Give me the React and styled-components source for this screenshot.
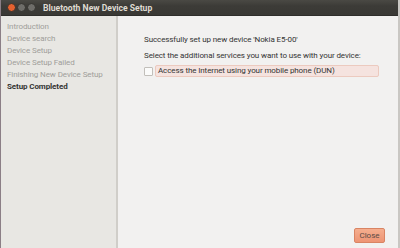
import styled, { createGlobalStyle } from "styled-components";

const GlobalStyle = createGlobalStyle`
  html, body {
    margin: 0;
    padding: 0;
    background: #f2f1f0;
  }
  body {
    font-family: Roboto, "Liberation Sans", sans-serif;
  }
`;

const steps = [
  "Introduction",
  "Device search",
  "Device Setup",
  "Device Setup Failed",
  "Finishing New Device Setup",
  "Setup Completed",
];

const App = () => {
  return (
    <>
      <GlobalStyle />
      <Window>
        <TitleBar>
          <WindowButtons>
            <WinButton color="#e5612f" />
            <WinButton color="#6e6d69" />
            <WinButton color="#6e6d69" />
          </WindowButtons>
          <Title>Bluetooth New Device Setup</Title>
        </TitleBar>
        <Body>
          <Sidebar>
            {steps.map((step, i) => (
              <Step key={step} current={i === steps.length - 1}>
                {step}
              </Step>
            ))}
          </Sidebar>
          <Content>
            <Message>Successfully set up new device 'Nokia E5-00'</Message>
            <Message>Select the additional services you want to use with your device:</Message>
            <ServiceRow>
              <CheckBox />
              <ServiceLabel>Access the Internet using your mobile phone (DUN)</ServiceLabel>
            </ServiceRow>
            <Footer>
              <CloseButton>Close</CloseButton>
            </Footer>
          </Content>
        </Body>
      </Window>
    </>
  );
};

export default App;

const Window = styled.div`
  width: 400px;
  height: 248px;
  display: flex;
  flex-direction: column;
  overflow: hidden;
  border-left: 1px solid #8b7f86;
  border-right: 2px solid #c9c7c3;
  box-sizing: border-box;
`;

const TitleBar = styled.div`
  height: 15px;
  flex-shrink: 0;
  display: flex;
  align-items: center;
  background: linear-gradient(#4a4944, #3c3b37 40%, #3a3935);
  border-bottom: 1px solid #2f2e2b;
`;

const WindowButtons = styled.div`
  display: flex;
  gap: 1px;
  padding-left: 6px;
`;

const WinButton = styled.div`
  width: 7px;
  height: 7px;
  border-radius: 50%;
  background: ${({ color }) => color};
  border: 1px solid #34332f;
`;

const Title = styled.div`
  margin-left: 7px;
  font-family: Roboto, "Liberation Sans", sans-serif;
  font-weight: bold;
  font-size: 8.6px;
  color: #dfdbd2;
  letter-spacing: 0;
`;

const Body = styled.div`
  flex: 1;
  display: flex;
  min-height: 0;
`;

const Sidebar = styled.div`
  width: 117px;
  flex-shrink: 0;
  background: #e8e7e3;
  border-right: 2px solid #d0cec9;
  padding: 5px 0 0 6px;
  box-sizing: border-box;
  display: flex;
  flex-direction: column;
  overflow: hidden;
`;

const Step = styled.div`
  font-size: 8px;
  letter-spacing: -0.1px;
  line-height: 12px;
  color: ${({ current }) => (current ? "#353533" : "#a09e9a")};
  font-weight: ${({ current }) => (current ? "bold" : "normal")};
  white-space: nowrap;
`;

const Content = styled.div`
  flex: 1;
  min-width: 0;
  display: flex;
  flex-direction: column;
  padding: 18px 13px 5px 26px;
  background: #f2f1f0;
`;

const Message = styled.div`
  font-size: 8px;
  letter-spacing: -0.1px;
  line-height: 12px;
  color: #333333;
  margin-bottom: 4px;
  white-space: nowrap;
`;

const ServiceRow = styled.div`
  display: flex;
  align-items: center;
  gap: 2px;
  margin-top: -1px;
`;

const CheckBox = styled.div`
  width: 7px;
  height: 7px;
  border: 1px solid #c2bfba;
  border-radius: 1px;
  background: #fbfbfa;
  flex-shrink: 0;
`;

const ServiceLabel = styled.div`
  width: 224px;
  box-sizing: border-box;
  height: 12px;
  padding-left: 2px;
  font-size: 8px;
  letter-spacing: -0.1px;
  line-height: 10px;
  color: #333333;
  background: #f5e3df;
  border: 1px solid #eccabf;
  border-radius: 2px;
  white-space: nowrap;
`;

const Footer = styled.div`
  margin-top: auto;
  display: flex;
  justify-content: flex-end;
`;

const CloseButton = styled.div`
  width: 31px;
  height: 15px;
  box-sizing: border-box;
  display: flex;
  align-items: center;
  justify-content: center;
  font-size: 8px;
  color: #5b4c46;
  background: linear-gradient(#f5ae8e, #ee9474);
  border: 1px solid #d98463;
  border-radius: 2px;
`;
